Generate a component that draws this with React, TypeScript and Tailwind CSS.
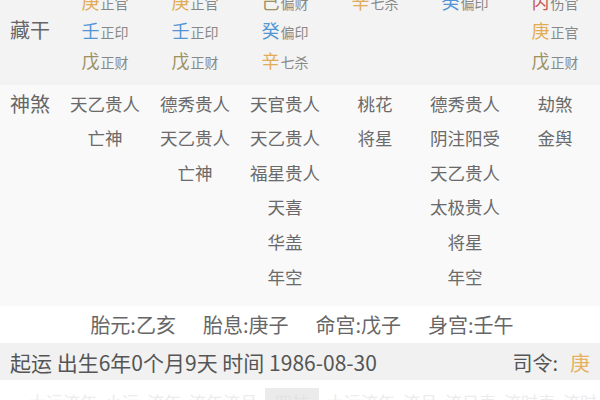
import * as React from 'react';

const font = { fontFamily: '"Noto Sans CJK SC", "Noto Sans", sans-serif' };

type Hidden = { stem: string; god: string; color: string };

const cangGan: (Hidden | null)[][] = [
  [
    { stem: '庚', god: '正官', color: 'text-[#e2ab55]' },
    { stem: '庚', god: '正官', color: 'text-[#e2ab55]' },
    { stem: '己', god: '偏财', color: 'text-[#9c9160]' },
    { stem: '辛', god: '七杀', color: 'text-[#e2ab55]' },
    { stem: '癸', god: '偏印', color: 'text-[#5295d6]' },
    { stem: '丙', god: '伤官', color: 'text-[#c85b57]' },
  ],
  [
    { stem: '壬', god: '正印', color: 'text-[#5295d6]' },
    { stem: '壬', god: '正印', color: 'text-[#5295d6]' },
    { stem: '癸', god: '偏印', color: 'text-[#5295d6]' },
    null,
    null,
    { stem: '庚', god: '正官', color: 'text-[#e2ab55]' },
  ],
  [
    { stem: '戊', god: '正财', color: 'text-[#9c9160]' },
    { stem: '戊', god: '正财', color: 'text-[#9c9160]' },
    { stem: '辛', god: '七杀', color: 'text-[#e2ab55]' },
    null,
    null,
    { stem: '戊', god: '正财', color: 'text-[#9c9160]' },
  ],
];

const shenSha: string[][] = [
  ['天乙贵人', '亡神'],
  ['德秀贵人', '天乙贵人', '亡神'],
  ['天官贵人', '天乙贵人', '福星贵人', '天喜', '华盖', '年空'],
  ['桃花', '将星'],
  ['德秀贵人', '阴注阳受', '天乙贵人', '太极贵人', '将星', '年空'],
  ['劫煞', '金舆'],
];

const taiInfo = ['胎元:乙亥', '胎息:庚子', '命宫:戊子', '身宫:壬午'];

const tabs = ['大运流年', '小运', '流年', '流年流月', '四柱', '大运流年', '流月', '流日表', '流时表', '流时'];

export default function App() {
  return (
    <div className="w-[600px] h-[400px] overflow-hidden bg-white" style={font}>
      {/* 藏干 */}
      <div className="flex bg-[#f3f3f3] -mt-[14px] pb-[10px]">
        <div className="w-[60px] flex items-center pl-[10px] text-[20px] text-[#666]">藏干</div>
        <div className="flex-1 flex flex-col">
          {cangGan.map((row, i) => (
            <div key={i} className="grid grid-cols-6 h-[29.5px]">
              {row.map((c, j) => (
                <div key={j} className="flex items-center justify-center">
                  {c && (
                    <span className="flex items-baseline">
                      <span className={`text-[18px] leading-none ${c.color}`}>{c.stem}</span>
                      <span className="text-[14px] leading-none text-[#888] ml-[1px]">{c.god}</span>
                    </span>
                  )}
                </div>
              ))}
            </div>
          ))}
        </div>
      </div>

      {/* 神煞 */}
      <div className="flex bg-[#f9f9f9] pt-[2px] pb-[12px]">
        <div className="w-[60px] pl-[10px] h-[34.6px] flex items-center text-[20px] text-[#666]">神煞</div>
        <div className="flex-1 grid grid-cols-6">
          {shenSha.map((col, j) => (
            <div key={j} className="flex flex-col items-center">
              {col.map((s, k) => (
                <div key={k} className="h-[34.6px] flex items-center text-[17.5px] text-[#6a6a6a]">
                  {s}
                </div>
              ))}
              {Array.from({ length: 6 - col.length }).map((_, k) => (
                <div key={'e' + k} className="h-[34.6px]" />
              ))}
            </div>
          ))}
        </div>
      </div>

      {/* 胎元 */}
      <div className="h-[37px] flex items-center justify-center gap-[27px] pl-[4px] text-[20px] text-[#666] bg-white">
        {taiInfo.map((t) => (
          <span key={t}>{t}</span>
        ))}
      </div>

      {/* 起运 */}
      <div className="h-[37px] flex items-center justify-between pl-[10px] pr-[10px] pt-[3px] bg-[#f1f1f1] text-[#555]">
        <span className="text-[21px]">起运 出生6年0个月9天 时间 1986-08-30</span>
        <span className="flex items-center text-[20px]">
          司令:<span className="ml-[12px] text-[#e6b060]">庚</span>
        </span>
      </div>

      {/* 大运 tabs (cut off) */}
      <div className="flex items-start pt-[8px] pl-[29px] gap-[8px] text-[17px] leading-[28px] text-[#ececec] bg-white whitespace-nowrap">
        {tabs.map((t, i) =>
          i === 4 ? (
            <span key={i} className="bg-[#ebebeb] text-[#e3e3e3] px-[10px]">{t}</span>
          ) : (
            <span key={i}>{t}</span>
          )
        )}
      </div>
    </div>
  );
}
